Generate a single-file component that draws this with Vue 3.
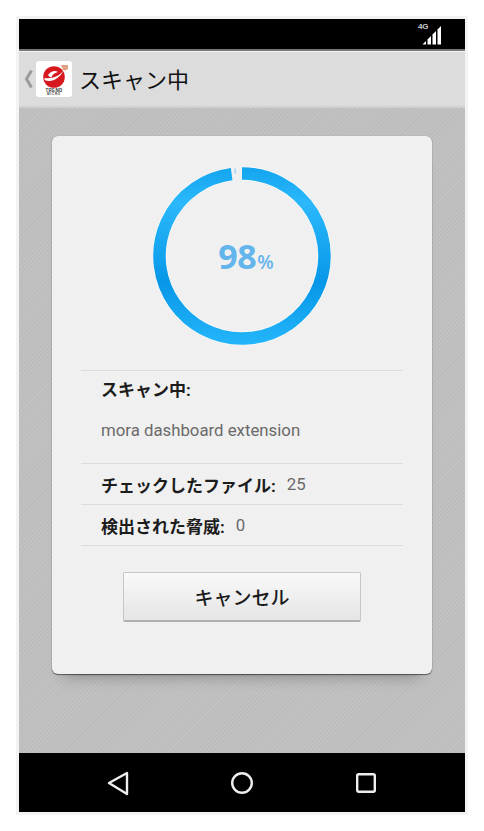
<script setup>
const rows = [
  { label: 'チェックしたファイル:', value: '25' },
  { label: '検出された脅威:', value: '0' }
]
</script>

<template>
  <div class="page">
    <div class="phone">
      <header class="status">
        <div class="signal">
          <span class="net">4G</span>
          <svg width="20" height="19" viewBox="0 0 20 19">
            <path d="M0.5 18.5 L4 15 V18.5 Z" fill="#fff" />
            <path d="M5.5 13.5 L9 10 V18.5 H5.5 Z" fill="#fff" />
            <path d="M10.5 8.5 L14 5 V18.5 H10.5 Z" fill="#fff" />
            <path d="M15.5 3.5 L19 0 V18.5 H15.5 Z" fill="#fff" />
          </svg>
        </div>
      </header>

      <div class="actionbar">
        <svg class="chevron" width="9" height="20" viewBox="0 0 9 20">
          <path d="M7.5 1.5 L2.5 10 L7.5 18.5" fill="none" stroke="#9a9a9a" stroke-width="3" />
        </svg>
        <div class="logo">
          <svg class="ball" width="26" height="24" viewBox="0 0 26 24">
            <circle cx="11" cy="13" r="10.8" fill="#d7181f" />
            <path d="M1.5 16 C9 19 17 14 20 7 C16 12 10 15 1.5 14 Z" fill="#fff" />
            <path d="M5 11 C8 7 12 6 15 8 C11 9 9 11 8.5 13.5 C7 13.5 6 12.5 5 11 Z" fill="#fff" />
            <path d="M18 1 H25 V4 C25 6 22 7 20 6 Z" fill="#e0a184" />
          </svg>
          <span class="brand">TREND</span>
          <span class="brand sub">MICRO</span>
        </div>
        <h1 class="title">スキャン中</h1>
      </div>

      <main class="content">
        <section class="card">
          <div class="ring">
            <svg width="178" height="178" viewBox="0 0 178 178">
              <defs>
                <linearGradient id="ringFill" gradientUnits="userSpaceOnUse" x1="0" y1="0" x2="0" y2="178">
                  <stop offset="0" stop-color="#12a4ee" />
                  <stop offset="0.2" stop-color="#2bb8fb" />
                  <stop offset="0.65" stop-color="#0797e8" />
                  <stop offset="1" stop-color="#24b6fa" />
                </linearGradient>
              </defs>
              <path d="M89 6.5 A82.5 82.5 0 1 1 78.66 7.15" fill="none" stroke="#fff" stroke-opacity="0.7" stroke-width="14" />
              <path d="M89 6.5 A82.5 82.5 0 1 1 78.66 7.15" fill="none" stroke="url(#ringFill)" stroke-width="12.5" />
              <path d="M82 1.5 L82.3 6.5" stroke="#8ccdf3" stroke-width="1.2" />
            </svg>
            <div class="percent"><span class="num">98</span><span class="pct">%</span></div>
          </div>

          <div class="scan">
            <div class="scan-label">スキャン中:</div>
            <div class="scan-file">mora dashboard extension</div>
          </div>

          <div v-for="row in rows" :key="row.label" class="row">
            <span class="row-label">{{ row.label }}</span>
            <span class="row-value">{{ row.value }}</span>
          </div>

          <div class="actions">
            <button class="cancel" type="button">キャンセル</button>
          </div>
        </section>
      </main>

      <nav class="navbar">
        <svg width="24" height="26" viewBox="0 0 24 26">
          <path d="M3 13 L21 3 V24 Z" fill="none" stroke="#eee" stroke-width="2.4" stroke-linejoin="round" />
        </svg>
        <svg width="24" height="26" viewBox="0 0 24 26">
          <circle cx="12" cy="13" r="9.8" fill="none" stroke="#eee" stroke-width="2.4" />
        </svg>
        <svg width="24" height="26" viewBox="0 0 24 26">
          <rect x="3.2" y="4.2" width="17.6" height="17.6" rx="1.5" fill="none" stroke="#eee" stroke-width="2.4" />
        </svg>
      </nav>
    </div>
  </div>
</template>

<style>
html, body { margin: 0; background: #fff; }
</style>

<style scoped>
.page {
  width: 484px;
  height: 831px;
  padding: 16px;
  box-sizing: border-box;
  font-family: Roboto, "Noto Sans CJK JP", sans-serif;
}
.phone {
  height: 799px;
  padding: 3px;
  box-sizing: border-box;
  background: #f3f3f3;
  display: flex;
  flex-direction: column;
}
.status {
  height: 32px;
  box-sizing: border-box;
  background: #000;
  border-bottom: 2px solid #777;
  display: flex;
  justify-content: flex-end;
  padding-right: 23px;
}
.signal {
  position: relative;
  width: 20px;
  padding-top: 7px;
}
.signal svg { display: block; }
.net {
  position: absolute;
  left: -4px;
  top: 3px;
  font: 700 8px/9px "Liberation Sans", sans-serif;
  letter-spacing: -0.2px;
  color: #ccc;
}
.actionbar {
  height: 57px;
  box-sizing: border-box;
  background: #dcdcdc;
  border-top: 1px solid #f4f4f4;
  border-bottom: 2px solid #d0d0d0;
  display: flex;
  align-items: center;
  padding-left: 5px;
}
.chevron { margin-right: 3px; }
.logo {
  width: 36px;
  height: 36px;
  background: #fff;
  border-radius: 3px;
  display: flex;
  flex-direction: column;
  align-items: center;
  margin-right: 7px;
}
.ball { margin: 3px 0 0 3px; }
.brand {
  font: 700 4.5px/5px "Liberation Sans", sans-serif;
  color: #333;
  letter-spacing: 0.3px;
}
.brand.sub { font-size: 3px; line-height: 3px; letter-spacing: 0.8px; }
.title {
  margin: 0;
  padding-top: 3px;
  font-size: 22px;
  font-weight: 400;
  color: #111;
  line-height: 30px;
}
.content {
  flex: 1;
  padding: 28px 33px 0;
  background: repeating-linear-gradient(-45deg, #c2c2c2 0 1.5px, #bcbcbc 1.5px 3px);
}
.card {
  height: 538px;
  box-sizing: border-box;
  padding: 31px 29px 0;
  background: #f0f0f0;
  border-radius: 6px;
  box-shadow: 0 1px 1px rgba(0, 0, 0, 0.5), 0 0 1px rgba(0, 0, 0, 0.3), 0 14px 14px -12px rgba(0, 0, 0, 0.3);
}
.ring {
  display: grid;
  justify-items: center;
  align-items: center;
  height: 178px;
  margin-bottom: 25px;
}
.ring > * { grid-area: 1 / 1; }
.percent {
  color: #63b5ec;
  font-family: "Open Sans", sans-serif;
  padding-left: 8px;
  display: flex;
  align-items: baseline;
}
.num { font-size: 34px; font-weight: 700; line-height: 40px; letter-spacing: -0.5px; }
.pct { font-size: 19px; font-weight: 600; margin-left: 1px; }
.scan {
  height: 94px;
  box-sizing: border-box;
  border-top: 1px solid #dcdcdc;
  border-bottom: 1px solid #dcdcdc;
  padding: 7px 20px 0;
}
.scan-label {
  font-size: 17px;
  font-weight: 700;
  line-height: 24px;
  color: #1c1c1c;
}
.scan-file {
  margin-top: 16px;
  font-size: 16.8px;
  line-height: 24px;
  color: #6a6a6a;
}
.row {
  height: 41px;
  box-sizing: border-box;
  border-bottom: 1px solid #dcdcdc;
  padding: 0 20px;
  display: flex;
  align-items: center;
  gap: 11px;
}
.row-label {
  font-size: 17px;
  font-weight: 700;
  color: #1c1c1c;
}
.row-value {
  font-size: 16.8px;
  color: #6a6a6a;
}
.actions {
  display: flex;
  justify-content: center;
  margin-top: 26px;
}
.cancel {
  width: 238px;
  height: 50px;
  box-sizing: border-box;
  border: 1px solid #c6c6c6;
  border-bottom: 2px solid #b0b0b0;
  border-radius: 2px;
  background: linear-gradient(#f9f9f9, #e5e5e5);
  font-family: Roboto, "Noto Sans CJK JP", sans-serif;
  font-size: 19px;
  font-weight: 500;
  color: #1a1a1a;
  padding: 0;
}
.navbar {
  height: 59px;
  background: #000;
  display: flex;
  align-items: center;
  justify-content: center;
  gap: 100px;
}
.navbar svg { display: block; }
</style>
